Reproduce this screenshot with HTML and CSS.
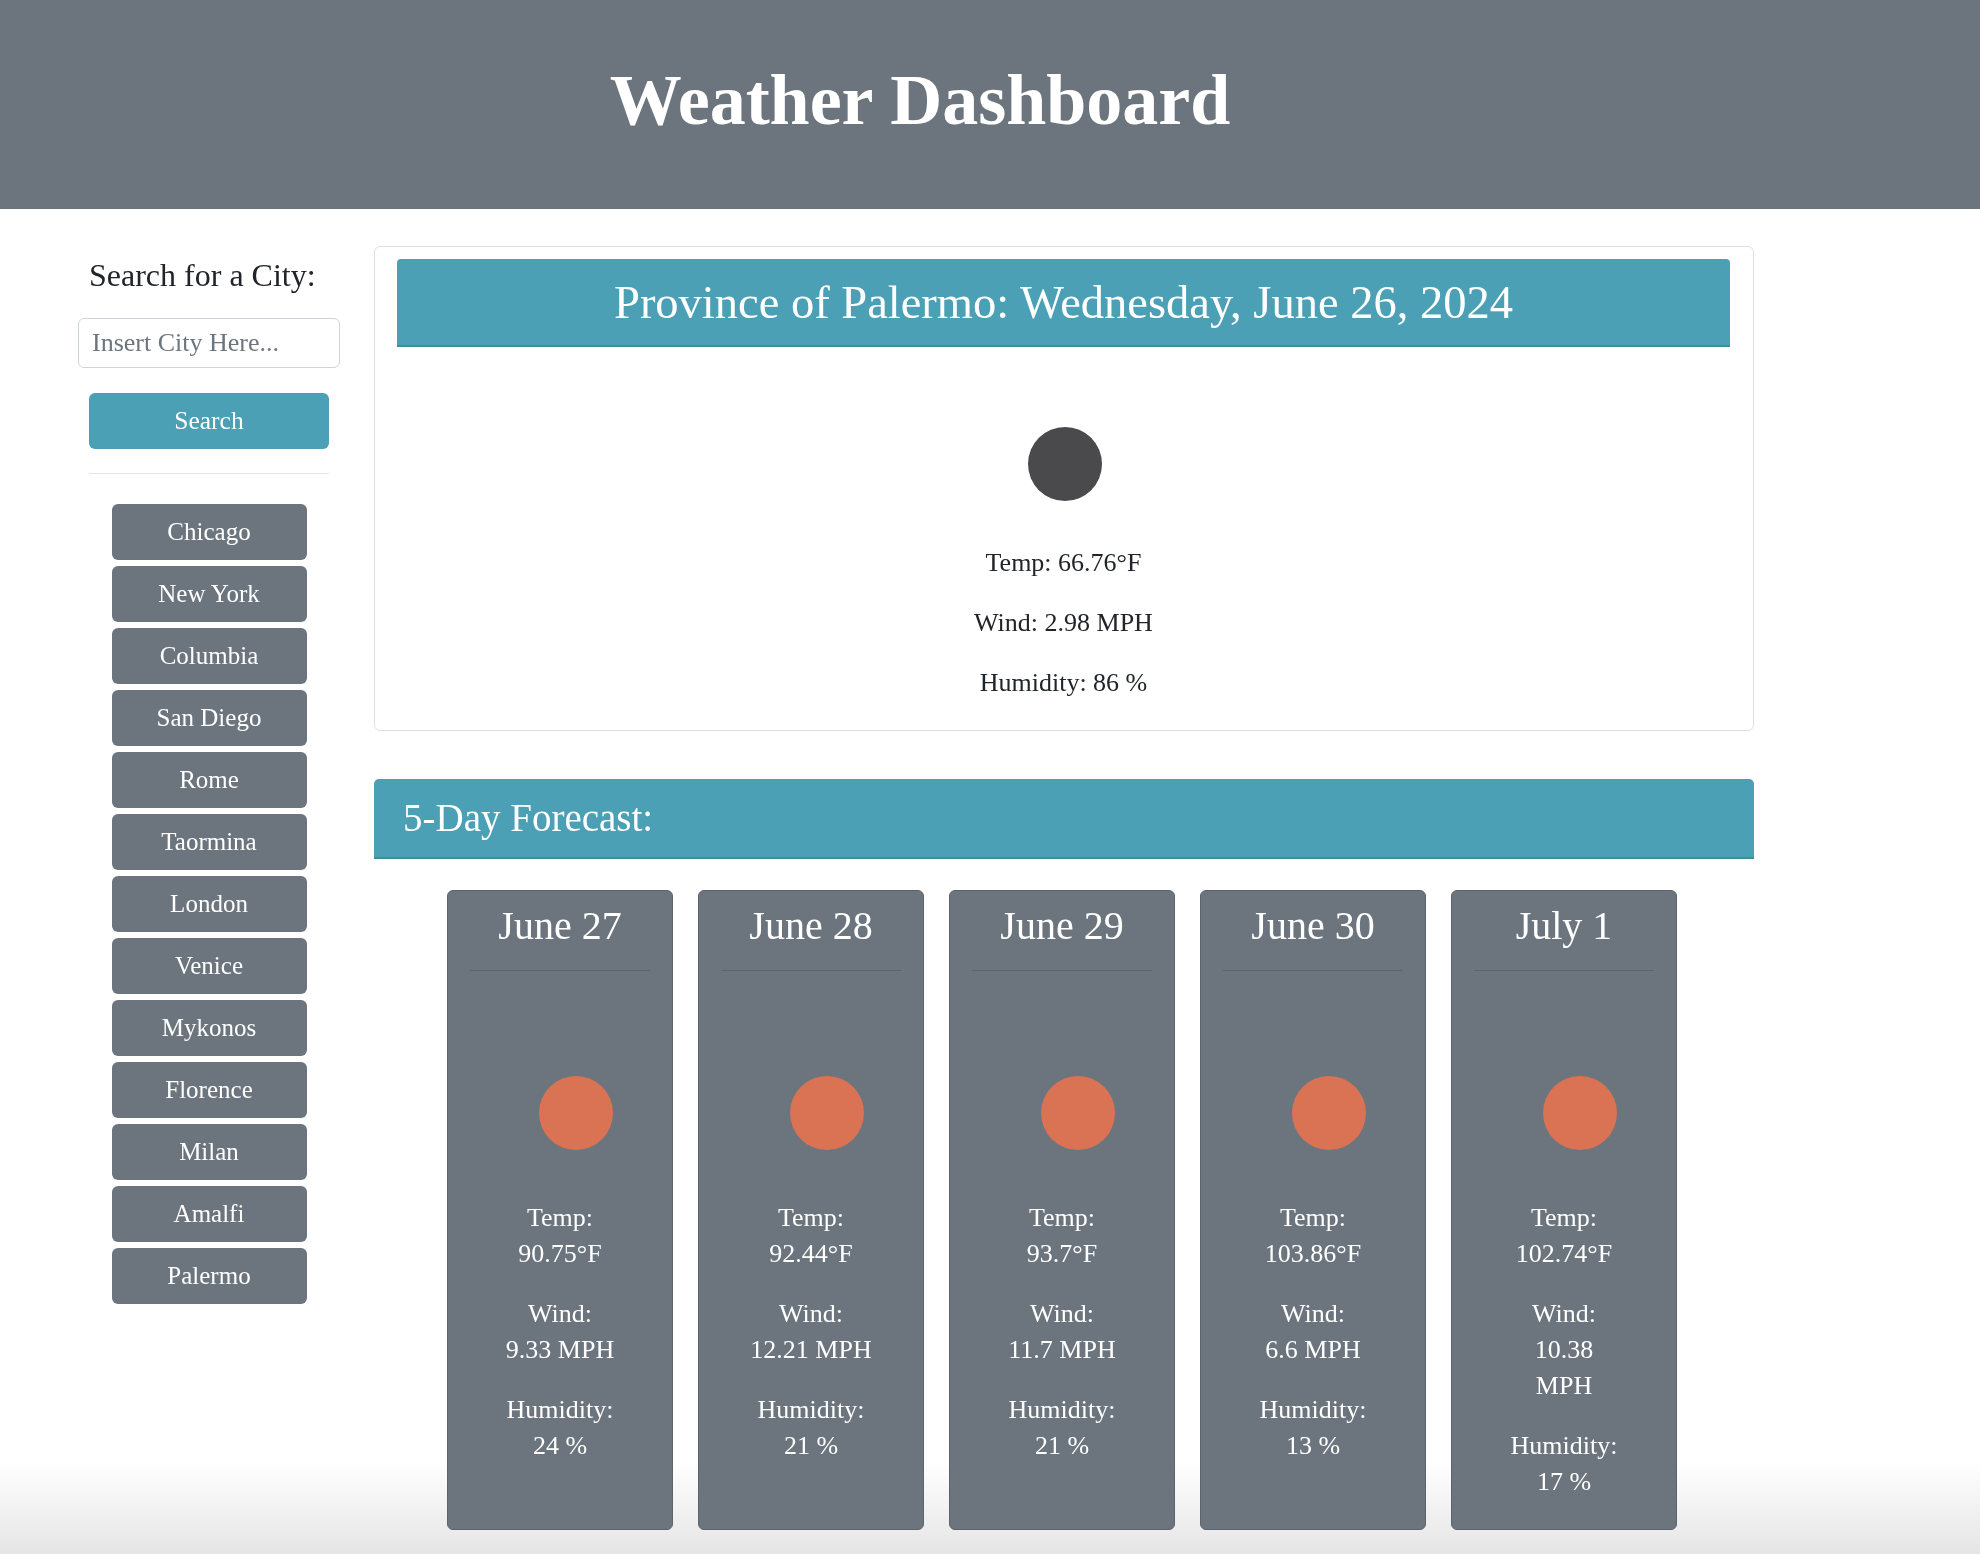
FILE: index.html
```html
<!DOCTYPE html>
<html lang="en">
<head>
<meta charset="utf-8">
<title>Weather Dashboard</title>
<link rel="stylesheet" href="styles.css">
</head>
<body>
<header class="site-header">
  <h1 class="site-title">Weather Dashboard</h1>
</header>
<div class="layout">
  <aside class="sidebar">
    <h4 class="search-label">Search for a City:</h4>
    <input class="city-input" type="text" placeholder="Insert City Here...">
    <button class="search-btn" type="button">Search</button>
    <hr class="sidebar-rule">
    <div class="city-list">
      <button class="city-btn" type="button">Chicago</button>
      <button class="city-btn" type="button">New York</button>
      <button class="city-btn" type="button">Columbia</button>
      <button class="city-btn" type="button">San Diego</button>
      <button class="city-btn" type="button">Rome</button>
      <button class="city-btn" type="button">Taormina</button>
      <button class="city-btn" type="button">London</button>
      <button class="city-btn" type="button">Venice</button>
      <button class="city-btn" type="button">Mykonos</button>
      <button class="city-btn" type="button">Florence</button>
      <button class="city-btn" type="button">Milan</button>
      <button class="city-btn" type="button">Amalfi</button>
      <button class="city-btn" type="button">Palermo</button>
    </div>
  </aside>
  <main class="main">
    <section class="today-card">
      <h2 class="today-header">Province of Palermo: Wednesday, June 26, 2024</h2>
      <div class="today-icon"></div>
      <p class="today-stat">Temp: 66.76°F</p>
      <p class="today-stat">Wind: 2.98 MPH</p>
      <p class="today-stat">Humidity: 86 %</p>
    </section>
    <h3 class="forecast-header">5-Day Forecast:</h3>
    <div class="forecast-row">
      <div class="day-card">
        <h3 class="day-date">June 27</h3>
        <hr class="day-rule">
        <div class="sun"></div>
        <p class="day-stat">Temp:<br>90.75°F</p>
        <p class="day-stat">Wind:<br>9.33 MPH</p>
        <p class="day-stat">Humidity:<br>24 %</p>
      </div>
      <div class="day-card">
        <h3 class="day-date">June 28</h3>
        <hr class="day-rule">
        <div class="sun"></div>
        <p class="day-stat">Temp:<br>92.44°F</p>
        <p class="day-stat">Wind:<br>12.21 MPH</p>
        <p class="day-stat">Humidity:<br>21 %</p>
      </div>
      <div class="day-card">
        <h3 class="day-date">June 29</h3>
        <hr class="day-rule">
        <div class="sun"></div>
        <p class="day-stat">Temp:<br>93.7°F</p>
        <p class="day-stat">Wind:<br>11.7 MPH</p>
        <p class="day-stat">Humidity:<br>21 %</p>
      </div>
      <div class="day-card">
        <h3 class="day-date">June 30</h3>
        <hr class="day-rule">
        <div class="sun"></div>
        <p class="day-stat">Temp:<br>103.86°F</p>
        <p class="day-stat">Wind:<br>6.6 MPH</p>
        <p class="day-stat">Humidity:<br>13 %</p>
      </div>
      <div class="day-card">
        <h3 class="day-date">July 1</h3>
        <hr class="day-rule">
        <div class="sun"></div>
        <p class="day-stat">Temp:<br>102.74°F</p>
        <p class="day-stat">Wind:<br>10.38<br>MPH</p>
        <p class="day-stat">Humidity:<br>17 %</p>
      </div>
    </div>
  </main>
</div>
</body>
</html>
```
FILE: styles.css
```css
html {
  background: #ffffff;
}
body {
  margin: 0;
  font-family: "Liberation Serif", "Times New Roman", serif;
  color: #212529;
  font-size: 26px;
}
body::after {
  content: "";
  position: fixed;
  left: 0;
  right: 0;
  bottom: 0;
  height: 92px;
  background: linear-gradient(to bottom, rgba(0,0,0,0), rgba(0,0,0,0.1));
  z-index: -1;
}

/* Header */
.site-header {
  background: #6c757d;
  height: 209px;
  box-sizing: border-box;
  padding: 58px 140px 0 0;
  text-align: center;
}
.site-title {
  margin: 0;
  color: #fff;
  font-size: 72px;
  line-height: 84px;
  font-weight: bold;
}

/* Layout */
.layout {
  display: flex;
  align-items: flex-start;
  padding-left: 89px;
  gap: 45px;
}

/* Sidebar */
.sidebar {
  width: 240px;
  flex: none;
  padding-top: 47px;
  display: flex;
  flex-direction: column;
}
.search-label {
  margin: 0;
  font-size: 32px;
  line-height: 38px;
  font-weight: normal;
}
.city-input {
  margin: 24px 0 0 -11px;
  width: 262px;
  height: 50px;
  box-sizing: border-box;
  border: 1px solid #ced4da;
  border-radius: 6px;
  padding: 0 13px;
  font-family: inherit;
  font-size: 26px;
  color: #212529;
  background: #fff;
}
.city-input::placeholder {
  color: #6c757d;
}
.search-btn {
  margin-top: 25px;
  height: 56px;
  border: none;
  border-radius: 6px;
  background: #4ba0b5;
  color: #fff;
  font-family: inherit;
  font-size: 25.5px;
  padding: 0;
}
.sidebar-rule {
  margin: 24px 0 0;
  border: none;
  border-top: 1px solid #e2e3e5;
  height: 0;
}
.city-list {
  margin-top: 30px;
  display: flex;
  flex-direction: column;
  align-items: center;
  gap: 6px;
}
.city-btn {
  width: 195px;
  height: 56px;
  border: none;
  border-radius: 6px;
  background: #6c757d;
  color: #fff;
  font-family: inherit;
  font-size: 25px;
  padding: 0;
}

/* Main */
.main {
  width: 1380px;
  flex: none;
  padding-top: 37px;
}
.today-card {
  border: 1px solid #dfe0e2;
  border-radius: 6px;
  padding: 12px 23px 4.5px 22px;
  display: flex;
  flex-direction: column;
  align-items: center;
}
.today-header {
  align-self: stretch;
  margin: 0;
  background: #4ba0b5;
  border-bottom: 2px solid #3f8d9f;
  border-radius: 4px 4px 0 0;
  color: #fff;
  font-size: 46.5px;
  font-weight: normal;
  line-height: 84px;
  padding-top: 2px;
  height: 84px;
  box-sizing: content-box;
  text-align: center;
}
.today-icon {
  width: 74px;
  height: 74px;
  border-radius: 50%;
  background: #4a4a4c;
  margin: 80px 0 44.5px 2px;
}
.today-stat {
  margin: 0 0 25.5px;
  line-height: 34.5px;
}
.forecast-header {
  margin: 48px 0 0;
  background: #4ba0b5;
  border-bottom: 2px solid #3f8d9f;
  border-radius: 5px 5px 0 0;
  color: #fff;
  font-size: 39px;
  font-weight: normal;
  line-height: 78px;
  padding-left: 29px;
}
.forecast-row {
  display: flex;
  justify-content: center;
  gap: 25px;
  margin: 31px 0 0 -4px;
}
.day-card {
  width: 226px;
  box-sizing: border-box;
  background: #6c757d;
  border: 1px solid #5c636a;
  border-radius: 6px;
  padding: 10.5px 22px 5px;
  color: #fff;
  text-align: center;
}
.day-date {
  margin: 0;
  font-size: 40px;
  font-weight: normal;
  line-height: 48px;
}
.day-rule {
  margin: 20.5px 0 0;
  border: none;
  border-top: 1px solid #5d646b;
  height: 0;
}
.sun {
  width: 74px;
  height: 74px;
  border-radius: 50%;
  background: #d97353;
  margin: 105px 0 50px 69px;
}
.day-stat {
  margin: 0 0 24px;
  line-height: 36px;
}
```
